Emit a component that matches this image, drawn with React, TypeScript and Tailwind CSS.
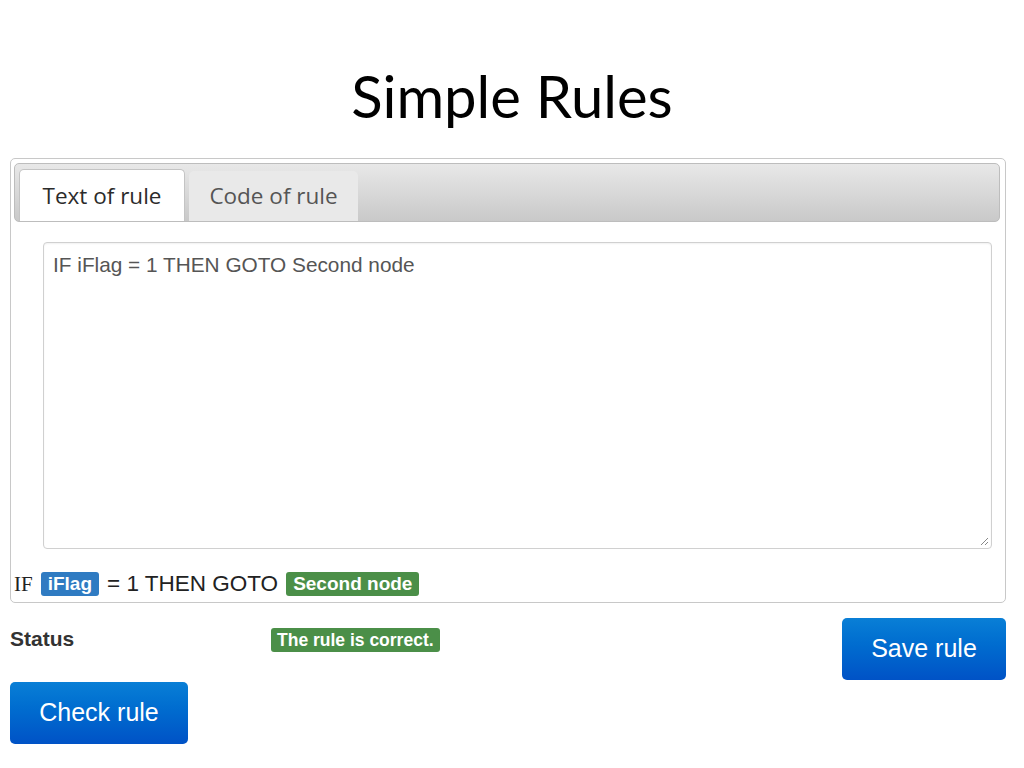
import { FC } from 'react';

const App: FC = () => {
  return (
    <div className="relative h-[768px] w-[1024px] bg-white font-['Liberation_Sans',sans-serif]">
      <h1 className="pt-[64px] text-center font-['Lato',sans-serif] text-[58px] leading-[64px] text-black">
        Simple Rules
      </h1>

      <div className="ml-[10px] mr-[18px] mt-[30px] h-[445px] rounded-[5px] border border-[#c8c8c8] pt-[4px]">
        <div className="ml-[3px] mr-[5px] flex h-[59px] items-end gap-[4px] rounded-[5px] border border-[#bdbdbd] bg-gradient-to-b from-[#e8e8e8] to-[#c9c9c9] px-[4px]">
          <div className="flex h-[52px] w-[166px] items-center justify-center rounded-t-[5px] border border-b-0 border-[#c4c4c4] bg-white font-['Open_Sans',sans-serif] text-[22.5px] text-[#2b2b2b]">
            Text of rule
          </div>
          <div className="flex h-[50px] w-[169px] items-center justify-center rounded-t-[5px] bg-[#e9e9e9] font-['Open_Sans',sans-serif] text-[22.5px] text-[#555]">
            Code of rule
          </div>
        </div>

        <div className="relative ml-[32px] mr-[13px] mt-[20px] h-[307px] rounded-[4px] border border-[#d0d0d0] px-[9px] pt-[9px] text-[20.8px] leading-[26px] text-[#555] shadow-[inset_0_1px_2px_rgba(0,0,0,0.06)]">
          IF iFlag = 1 THEN GOTO Second node
          <svg className="absolute bottom-[2px] right-[2px]" width="10" height="10" viewBox="0 0 10 10">
            <path d="M9 2 L2 9 M9 6 L6 9" stroke="#888" strokeWidth="1" />
          </svg>
        </div>

        <div className="mt-[22px] flex items-center gap-[8px] pl-[3px] text-[22.5px] leading-[26px] text-[#222]">
          <span className="font-['Liberation_Serif',serif] text-[21px]">IF</span>
          <span className="rounded-[3px] bg-[#2f7bc2] px-[7px] text-[19px] font-bold leading-[24px] text-white">iFlag</span>
          <span>= 1 THEN GOTO</span>
          <span className="rounded-[3px] bg-[#4b8f48] px-[7px] text-[19px] font-bold leading-[24px] text-white">Second node</span>
        </div>
      </div>

      <div className="ml-[10px] mr-[18px] mt-[15px] flex items-start">
        <div className="w-[261px] pt-[9px] text-[21px] font-bold leading-[24px] text-[#333]">Status</div>
        <div className="mt-[10px] rounded-[3px] bg-[#4b8f48] px-[6px] text-[17.5px] font-bold leading-[24px] text-white">
          The rule is correct.
        </div>
        <button className="ml-auto flex h-[62px] w-[164px] items-center justify-center rounded-[5px] bg-gradient-to-b from-[#0a7fd6] to-[#0052c6] text-[25px] text-white">
          Save rule
        </button>
      </div>

      <div className="px-[10px] pt-[2px]">
        <button className="flex h-[62px] w-[178px] items-center justify-center rounded-[5px] bg-gradient-to-b from-[#0a7fd6] to-[#0052c6] text-[25px] text-white">
          Check rule
        </button>
      </div>
    </div>
  );
};

export default App;
